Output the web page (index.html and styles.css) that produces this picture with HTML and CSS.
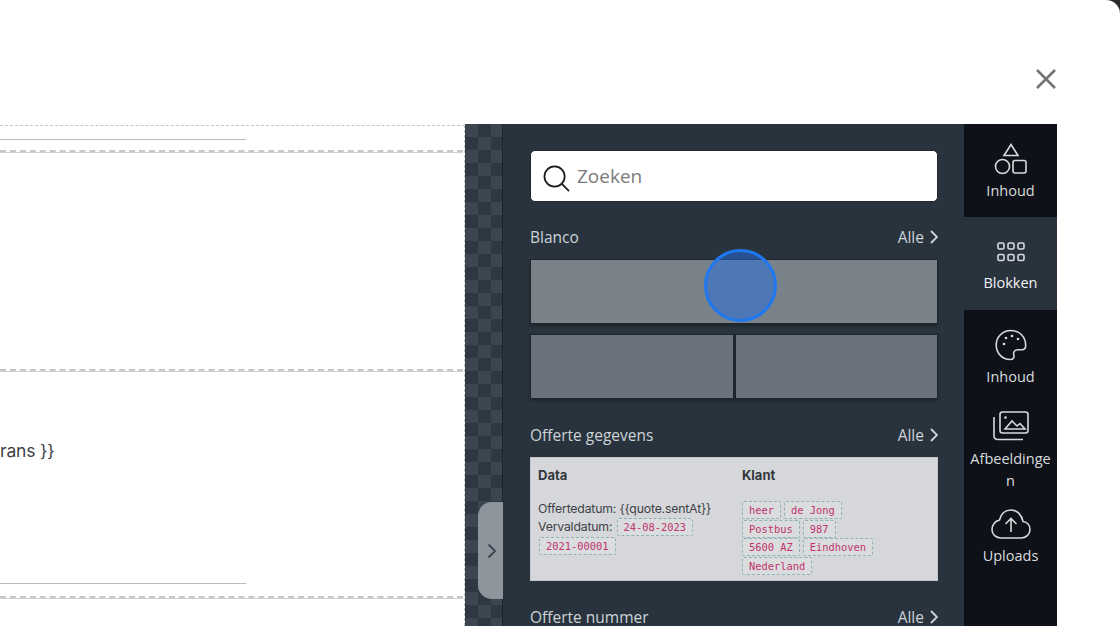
FILE: index.html
```html
<!DOCTYPE html>
<html lang="nl">
<head>
<meta charset="utf-8">
<title>Offerte editor</title>
<link rel="stylesheet" href="styles.css">
</head>
<body>
<div class="modal">
  <header class="topbar">
    <svg class="close" viewBox="0 0 22 22" aria-label="Sluiten"><path d="M2 2l18 18M20 2L2 20"/></svg>
  </header>
  <main class="workspace">
    <section class="doc">
      <div class="doc-block doc-a"><div class="rule"></div></div>
      <div class="doc-block doc-b"></div>
      <div class="doc-block doc-c">
        <p class="doc-text">rans }}</p>
        <div class="rule"></div>
      </div>
    </section>
    <div class="rail">
      <button class="handle" aria-label="Inklappen">
        <svg viewBox="0 0 10 16"><path d="M1.5 1.5L8 8l-6.500 6.500"/></svg>
      </button>
    </div>
    <section class="panel">
      <div class="search">
        <svg class="search-icon" viewBox="0 0 28 28"><circle cx="12" cy="12" r="10.500"/><path d="M19.500 19.500L27 27"/></svg>
        <span>Zoeken</span>
      </div>

      <div class="section-head"><span>Blanco</span><span class="all">Alle <svg viewBox="0 0 8 14"><path d="M1 1l6 6-6 6"/></svg></span></div>
      <div class="blank blank-one"></div>
      <div class="blank-two"><div class="blank"></div><div class="blank"></div></div>

      <div class="section-head head-offer"><span>Offerte gegevens</span><span class="all">Alle <svg viewBox="0 0 8 14"><path d="M1 1l6 6-6 6"/></svg></span></div>
      <div class="card">
        <div class="card-col card-data">
          <h3>Data</h3>
          <p>Offertedatum: {{quote.sentAt}}</p>
          <p>Vervaldatum: <code>24-08-2023</code></p>
          <p><code>2021-00001</code></p>
        </div>
        <div class="card-col card-client">
          <h3>Klant</h3>
          <div class="tags"><code>heer</code><code>de Jong</code></div>
          <div class="tags"><code>Postbus</code><code>987</code></div>
          <div class="tags"><code>5600 AZ</code><code>Eindhoven</code></div>
          <div class="tags"><code>Nederland</code></div>
        </div>
      </div>

      <div class="section-head head-number"><span>Offerte nummer</span><span class="all">Alle <svg viewBox="0 0 8 14"><path d="M1 1l6 6-6 6"/></svg></span></div>
      <div class="click-dot"></div>
    </section>
    <nav class="nav">
      <a class="nav-item item-shapes">
        <svg viewBox="0 0 34 32"><path d="M17 1.500l7 11H10z"/><circle cx="8.500" cy="23.500" r="7"/><rect x="19" y="17.500" width="13" height="12.500" rx="2"/></svg>
        <span>Inhoud</span>
      </a>
      <a class="nav-item item-blocks active">
        <svg viewBox="0 0 28 20"><rect x="1" y="1" width="6" height="6" rx="1.500"/><rect x="11" y="1" width="6" height="6" rx="1.500"/><rect x="21" y="1" width="6" height="6" rx="1.500"/><rect x="1" y="12.500" width="6" height="6" rx="1.500"/><rect x="11" y="12.500" width="6" height="6" rx="1.500"/><rect x="21" y="12.500" width="6" height="6" rx="1.500"/></svg>
        <span>Blokken</span>
      </a>
      <a class="nav-item item-palette">
        <svg viewBox="0 0 32 32"><path d="M16 1.500C7.500 1.500 1.200 8 1.200 16c0 8.300 6.300 14.500 14 14.500 3 0 4.300-2 3.600-4.500-.8-2.800.8-5.200 4-5.200h4c2.500 0 3.900-1.800 3.900-4.500C30.700 8 24.500 1.500 16 1.500z"/><circle class="dot" cx="9" cy="15" r="1.300"/><circle class="dot" cx="11" cy="9" r="1.300"/><circle class="dot" cx="17" cy="7" r="1.300"/><circle class="dot" cx="23" cy="10" r="1.300"/></svg>
        <span>Inhoud</span>
      </a>
      <a class="nav-item item-images">
        <svg viewBox="0 0 36 30"><rect x="7" y="1" width="28" height="21" rx="2.500"/><path d="M1 6v19a3.500 3.500 0 0 0 3.500 3.500H30"/><path d="M12 18l7-8 5 5 3-2.500 5 5.500z"/><circle class="dot" cx="12.500" cy="6.500" r="1.300"/></svg>
        <span>Afbeeldinge<br>n</span>
      </a>
      <a class="nav-item item-uploads">
        <svg viewBox="0 0 40 30"><path d="M10 29h20c5 0 9-3.500 9-8.500 0-4.500-3-7.500-7-8C31 6 26 1 20 1S10 5 8.500 11C4 12 1 16 1 20.500 1 25.500 5 29 10 29z"/><path d="M20 23V10M14.500 15L20 9.500l5.500 5.500"/></svg>
        <span>Uploads</span>
      </a>
    </nav>
    <div class="margin"></div>
  </main>
</div>
</body>
</html>
```
FILE: styles.css
```css
* { box-sizing: border-box; }
html, body { margin: 0; height: 100%; overflow: hidden; background: #2a2a2a; }
body { font-family: "Open Sans", "Noto Sans", sans-serif; }

.modal {
  width: 1120px;
  height: 626px;
  background: #fff;
  border-top-right-radius: 14px;
  display: flex;
  flex-direction: column;
  overflow: hidden;
}
.topbar {
  height: 124px;
  flex: none;
  display: flex;
  justify-content: flex-end;
  padding: 68px 63px 0 0;
}
.close { width: 22px; height: 22px; fill: none; stroke: #757575; stroke-width: 2.600; }

.workspace { flex: 1; display: flex; min-height: 0; }

/* Document */
.doc {
  width: 465px;
  flex: none;
  border-right: 1px dashed #c4c4c4;
  padding-right: 1px;
  border-top: 1px dashed #c4c4c4;
  overflow: hidden;
  background: #fff;
  margin-top: 1px;
}
.doc-block { position: relative; }
.doc-a { height: 26px; padding-top: 13px; border-bottom: 2px dashed #c8c8c8; box-shadow: 0 1px 0 #d0d0d0; }
.doc-b { height: 219px; border-bottom: 2px dashed #c8c8c8; box-shadow: 0 1px 0 #d0d0d0; }
.doc-c { height: 227px; padding-top: 69px; border-bottom: 2px dashed #c8c8c8; box-shadow: 0 1px 0 #d0d0d0; }
.rule { width: 246px; height: 1px; background: #bdbdbd; }
.doc-text {
  margin: 0 0 121px;
  height: 22px;
  font: 17.500px/22px "Inter", "Lato", sans-serif;
  color: #3d4148;
  letter-spacing: -.2px;
}

/* Checker rail */
.rail {
  width: 38px;
  flex: none;
  position: relative;
  background-color: #3b4651;
  background-image:
    linear-gradient(45deg, #2e3843 25%, transparent 25%, transparent 75%, #2e3843 75%),
    linear-gradient(45deg, #2e3843 25%, transparent 25%, transparent 75%, #2e3843 75%);
  background-size: 26px 26px;
  background-position: 0 0, 13px 13px;
  border-right: 1px solid #1d242c;
}
.handle {
  position: absolute;
  left: 13px;
  top: 378px;
  width: 25px;
  height: 97px;
  padding: 0 0 0 9px;
  border: 0;
  border-radius: 14px 0 0 14px;
  background: #8f959c;
  display: flex;
  align-items: center;
}
.handle svg { width: 10px; height: 16px; fill: none; stroke: #3f4650; stroke-width: 2; }

/* Panel */
.panel {
  width: 461px;
  flex: none;
  position: relative;
  background: #29333d;
  padding: 26px 26px 0 27px;
  overflow: hidden;
}
.search {
  height: 52px;
  background: #fff;
  border-radius: 5px;
  border: 1px solid #1f262e;
  display: flex;
  align-items: center;
  padding-left: 12px;
  font-size: 19px;
  color: #7b7b7b;
}
.search-icon { width: 27px; height: 27px; margin-right: 7px; margin-top: 4px; fill: none; stroke: #16191d; stroke-width: 1.800; }
.section-head {
  display: flex;
  justify-content: space-between;
  align-items: center;
  height: 22px;
  margin-top: 24px;
  font-size: 15.500px;
  color: #ced3d8;
}
.all { display: flex; align-items: center; gap: 6px; }
.all svg { width: 8px; height: 14px; fill: none; stroke: #ced3d8; stroke-width: 1.800; }
.head-offer { margin-top: 25px; }
.head-number { margin-top: 25px; }

.blank { height: 65px; border: 1px solid #1e252c; background: #6a737b; }
.blank-one { margin: 11px 0 0 0; background: #7a8289; box-shadow: 0 2px 3px rgba(0,0,0,.3); }
.blank-two { display: flex; gap: 0; margin-top: 10px; box-shadow: 0 2px 3px rgba(0,0,0,.25); }
.blank-two .blank { flex: 1; }
.blank-two .blank + .blank { border-left-width: 2px; }

.card {
  display: flex;
  height: 124px;
  margin-top: 11px;
  background: #d5d7da;
  border: 1px solid #c5c8cb;
  color: #3f4348;
  font: 12.300px/16px "Inter", "Lato", sans-serif;
}
.card-col { padding: 8px 0 0 7px; }
.card-data { width: 204px; }
.card h3 { margin: 0 0 17px; font: 700 13px/18px "Inter", "Lato", sans-serif; color: #33373d; }
.card p { margin: 0 0 1px; white-space: nowrap; letter-spacing: -.2px; }
.card code {
  display: inline-block;
  height: 18px;
  padding: 0 6px;
  font: 10.400px/16px "DejaVu Sans Mono", "Liberation Mono", monospace;
  color: #c0336d;
  background: #dadcde;
  border: 1px dashed #8fb2b8;
  border-radius: 2px;
  letter-spacing: 0;
}
.card-data p code { margin-left: 1px; }
.tags { display: flex; gap: 3px; height: 18px; margin-bottom: .5px; }

.click-dot {
  position: absolute;
  left: 201px;
  top: 125px;
  width: 73px;
  height: 73px;
  border-radius: 50%;
  border: 3px solid #1f78f0;
  background: rgba(38, 110, 225, .52);
}

/* Nav */
.nav {
  width: 93px;
  flex: none;
  background: #0e1218;
  color: #d8dbde;
  font-size: 14.500px;
  line-height: 22px;
  display: flex;
  flex-direction: column;
  text-align: center;
}
.nav-item { display: flex; flex-direction: column; align-items: center; }
.nav-item svg { fill: none; stroke: #d8dbde; stroke-width: 1.600; flex: none; }
.nav-item .dot { fill: #d8dbde; stroke: none; }
.nav-item span { display: block; }
.item-shapes { height: 93px; padding-top: 19px; }
.item-shapes svg { width: 34px; height: 32px; margin-bottom: 5px; }
.item-blocks { height: 93px; padding-top: 25px; }
.item-blocks svg { width: 28px; height: 20px; margin-bottom: 10px; }
.item-blocks.active { background: #29333d; color: #f0f2f3; }
.item-palette { height: 93px; padding-top: 19px; }
.item-palette svg { width: 32px; height: 32px; margin-bottom: 5px; }
.item-images { height: 100px; padding-top: 8px; }
.item-images svg { width: 36px; height: 30px; margin-bottom: 7px; }
.item-uploads { padding-top: 6px; }
.item-uploads svg { width: 40px; height: 30px; margin-bottom: 6px; }

.margin { flex: 1; background: #fff; }
```
